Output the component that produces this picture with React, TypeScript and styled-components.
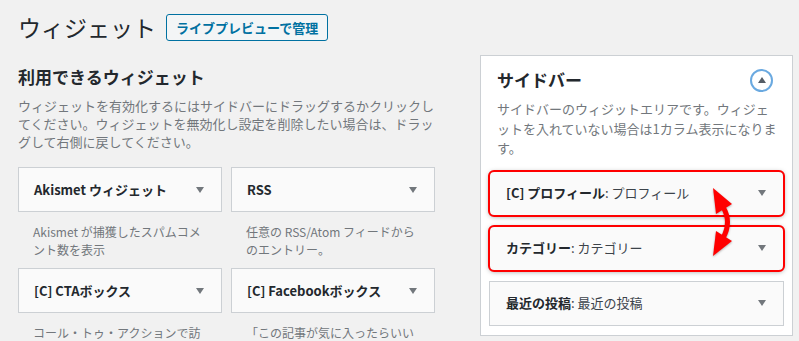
import React from "react";
import styled, { createGlobalStyle, css } from "styled-components";

const GlobalStyle = createGlobalStyle`
  html, body {
    margin: 0;
    padding: 0;
    background: #f1f1f1;
    overflow: hidden;
  }
  body {
    font-family: "Noto Sans CJK JP", "Noto Sans", sans-serif;
    color: #23282d;
    font-size: 13px;
  }
`;

const Page = styled.div`
  position: relative;
  width: 799px;
  height: 341px;
  padding: 14px 0 0 18px;
  box-sizing: border-box;
  overflow: hidden;
`;

const Header = styled.div`
  display: flex;
  align-items: center;
  gap: 10px;
  height: 27px;
`;

const PageTitle = styled.h1`
  margin: 0;
  font-size: 23px;
  font-weight: 400;
  line-height: 27px;
  color: #23282d;
`;

const ManageButton = styled.a`
  display: inline-flex;
  align-items: center;
  height: 27px;
  box-sizing: border-box;
  padding: 0 9px;
  border: 1px solid #0071a1;
  border-radius: 3px;
  background: #f3f5f6;
  color: #0071a1;
  font-size: 13px;
  font-weight: 700;
  line-height: 1;
  text-decoration: none;
`;

const Columns = styled.div`
  display: flex;
  gap: 45px;
  margin-top: 14px;
`;

const LeftColumn = styled.div`
  width: 417px;
`;

const SectionTitle = styled.h2`
  margin: 10px 0 0;
  font-size: 17px;
  font-weight: 700;
  line-height: 24px;
`;

const Description = styled.p`
  margin: 8px 0 0;
  font-size: 13px;
  line-height: 18px;
  color: #72777c;
`;

const WidgetGrid = styled.div`
  display: grid;
  grid-template-columns: 204px 204px;
  column-gap: 9px;
  margin-top: 16px;
`;

const WidgetItem = styled.div`
  display: flex;
  flex-direction: column;
`;

const WidgetBox = styled.div<{ $highlight?: boolean; $inSidebar?: boolean }>`
  display: flex;
  align-items: center;
  justify-content: space-between;
  height: 45px;
  box-sizing: border-box;
  padding: 0 17px 0 ${(p) => (p.$inSidebar ? "16px" : "15px")};
  border: 1px solid #ccd0d4;
  background: #fafafa;
  font-size: 13px;
  line-height: 18px;
  ${(p) =>
    p.$highlight &&
    css`
      border-radius: 5px;
      outline: 2px solid #f00;
      outline-offset: -1px;
      box-shadow: 0 1px 5px rgba(0, 0, 0, 0.35);
    `}
`;

const WidgetTitle = styled.span`
  font-weight: 700;
  color: #23282d;
`;

const InWidgetTitle = styled.span`
  font-weight: 400;
  color: #3c434a;
`;

const DownArrow = styled.span`
  width: 0;
  height: 0;
  border-left: 4px solid transparent;
  border-right: 4px solid transparent;
  border-top: 6px solid #72777c;
`;

const WidgetDesc = styled.div`
  padding: 11px 15px 9px;
  font-size: 12px;
  line-height: 18px;
  color: #72777c;
`;

const SidebarPanel = styled.div`
  width: 313px;
  height: 281px;
  box-sizing: border-box;
  border: 1px solid #ccd0d4;
  background: #fff;
`;

const SidebarHeader = styled.div`
  display: flex;
  align-items: center;
  justify-content: space-between;
  padding: 12px 19px 0 16px;
`;

const SidebarTitle = styled.h2`
  margin: 0;
  font-size: 17px;
  font-weight: 700;
  line-height: 24px;
`;

const ToggleButton = styled.span`
  display: flex;
  align-items: center;
  justify-content: center;
  width: 23px;
  height: 23px;
  box-sizing: border-box;
  border: 2px solid #6aa9e0;
  border-radius: 50%;
  background: #fff;

  &::after {
    content: "";
    width: 0;
    height: 0;
    margin-top: -1px;
    border-left: 4px solid transparent;
    border-right: 4px solid transparent;
    border-bottom: 6px solid #555d66;
  }
`;

const SidebarDesc = styled.p`
  margin: 7px 0 0;
  padding: 0 13px 0 16px;
  font-size: 13px;
  line-height: 19.5px;
  color: #72777c;
`;

const SidebarList = styled.div`
  display: flex;
  flex-direction: column;
  gap: 10px;
  margin-top: 13px;
  padding: 0 8px;
`;

const ArrowOverlay = styled.svg`
  position: absolute;
  left: 0;
  top: 0;
  pointer-events: none;
  filter: drop-shadow(0 1px 1px rgba(0, 0, 0, 0.3));
`;

const widgets = [
  { title: "Akismet ウィジェット", desc: "Akismet が捕獲したスパムコメント数を表示" },
  { title: "RSS", desc: "任意の RSS/Atom フィードからのエントリー。" },
  { title: "[C] CTAボックス", desc: "コール・トゥ・アクションで訪問者の行動を促します。" },
  { title: "[C] Facebookボックス", desc: "「この記事が気に入ったらいいね！」ボックスを表示します。" },
];

const sidebarWidgets = [
  { title: "[C] プロフィール", sub: "プロフィール", highlight: true },
  { title: "カテゴリー", sub: "カテゴリー", highlight: true },
  { title: "最近の投稿", sub: "最近の投稿", highlight: false },
];

export default function App() {
  return (
    <>
      <GlobalStyle />
      <Page>
        <Header>
          <PageTitle>ウィジェット</PageTitle>
          <ManageButton>ライブプレビューで管理</ManageButton>
        </Header>
        <Columns>
          <LeftColumn>
            <SectionTitle>利用できるウィジェット</SectionTitle>
            <Description>
              ウィジェットを有効化するにはサイドバーにドラッグするかクリックしてください。ウィジェットを無効化し設定を削除したい場合は、ドラッグして右側に戻してください。
            </Description>
            <WidgetGrid>
              {widgets.map((w) => (
                <WidgetItem key={w.title}>
                  <WidgetBox>
                    <WidgetTitle>{w.title}</WidgetTitle>
                    <DownArrow />
                  </WidgetBox>
                  <WidgetDesc>{w.desc}</WidgetDesc>
                </WidgetItem>
              ))}
            </WidgetGrid>
          </LeftColumn>
          <SidebarPanel>
            <SidebarHeader>
              <SidebarTitle>サイドバー</SidebarTitle>
              <ToggleButton />
            </SidebarHeader>
            <SidebarDesc>
              サイドバーのウィジットエリアです。ウィジェットを入れていない場合は1カラム表示になります。
            </SidebarDesc>
            <SidebarList>
              {sidebarWidgets.map((w) => (
                <WidgetBox key={w.title} $inSidebar $highlight={w.highlight}>
                  <span>
                    <WidgetTitle>{w.title}</WidgetTitle>
                    <InWidgetTitle>: {w.sub}</InWidgetTitle>
                  </span>
                  <DownArrow />
                </WidgetBox>
              ))}
            </SidebarList>
          </SidebarPanel>
        </Columns>
        {/* 並べ替えを示す赤い矢印 */}
        <ArrowOverlay width="799" height="341" viewBox="0 0 799 341">
          <path d="M723 207 Q732 222 723 238" fill="none" stroke="#f00" strokeWidth="5" />
          <polygon points="713,188 732,204 716,214" fill="#f00" />
          <polygon points="713,256 716,231 732,241" fill="#f00" />
        </ArrowOverlay>
      </Page>
    </>
  );
}
